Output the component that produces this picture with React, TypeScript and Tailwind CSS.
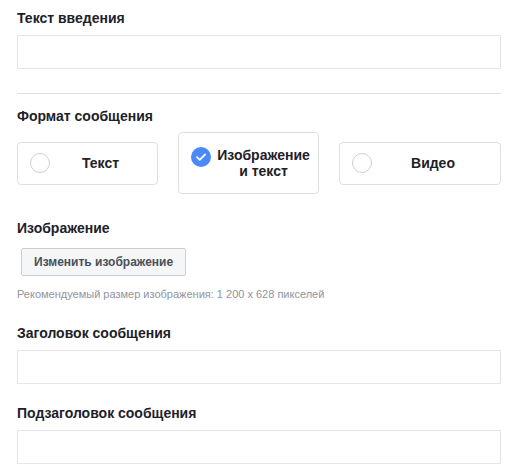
import * as React from "react";

function Label({ children }: { children: React.ReactNode }) {
  return <div className="text-[14px] leading-[18px] font-bold text-[#1d2129]">{children}</div>;
}

function Field() {
  return <div className="mt-[8px] h-[34px] w-full border border-[#e3e5e8] bg-white" />;
}

function Radio({ checked }: { checked?: boolean }) {
  if (checked) {
    return (
      <svg width="20" height="20" viewBox="0 0 20 20" className="shrink-0">
        <circle cx="10" cy="10" r="10" fill="#4b88f8" />
        <path d="M6 10.2l2.7 2.7 5.4-5.4" fill="none" stroke="#fff" strokeWidth="1.8" strokeLinecap="round" strokeLinejoin="round" />
      </svg>
    );
  }
  return <span className="block h-[20px] w-[20px] shrink-0 rounded-full border border-[#ccd0d5] bg-white" />;
}

function Option({ label, checked, width }: { label: string; checked?: boolean; width: string }) {
  return (
    <div
      className={`flex ${checked ? "items-start py-[14px] pr-[2px]" : "h-[43px] items-center pr-[6px]"} ${width} rounded-[4px] border border-[#dddfe2] bg-white pl-[12px]`}
    >
      <Radio checked={checked} />
      <div className="flex-1 text-center text-[14px] leading-[16px] font-bold text-[#1d2129]">{label}</div>
    </div>
  );
}

export default function App() {
  return (
    <div className="min-h-[471px] w-[511px] bg-white pl-[17px] pr-[10px] pt-[9px] font-['Liberation_Sans',Arial,sans-serif]">
      <Label>Текст введения</Label>
      <Field />

      <div className="mt-[24px] h-px w-full bg-[#dddfe2]" />

      <div className="mt-[13px]">
        <Label>Формат сообщения</Label>
      </div>
      <div className="mt-[7px] flex items-center gap-[20px]">
        <Option label="Текст" width="w-[141px]" />
        <Option label="Изображение и текст" checked width="w-[141px]" />
        <Option label="Видео" width="w-[162px]" />
      </div>

      <div className="mt-[25px]">
        <Label>Изображение</Label>
      </div>
      <button className="ml-[4px] mt-[11px] h-[28px] rounded-[2px] border border-[#ccd0d5] bg-[#f5f6f7] px-[12px] text-[12px] font-bold text-[#4b4f56]">
        Изменить изображение
      </button>
      <div className="mt-[11px] text-[11px] leading-[14px] text-[#90949c]">
        Рекомендуемый размер изображения: 1 200 x 628 пикселей
      </div>

      <div className="mt-[23px]">
        <Label>Заголовок сообщения</Label>
      </div>
      <Field />

      <div className="mt-[20px]">
        <Label>Подзаголовок сообщения</Label>
      </div>
      <Field />
    </div>
  );
}
